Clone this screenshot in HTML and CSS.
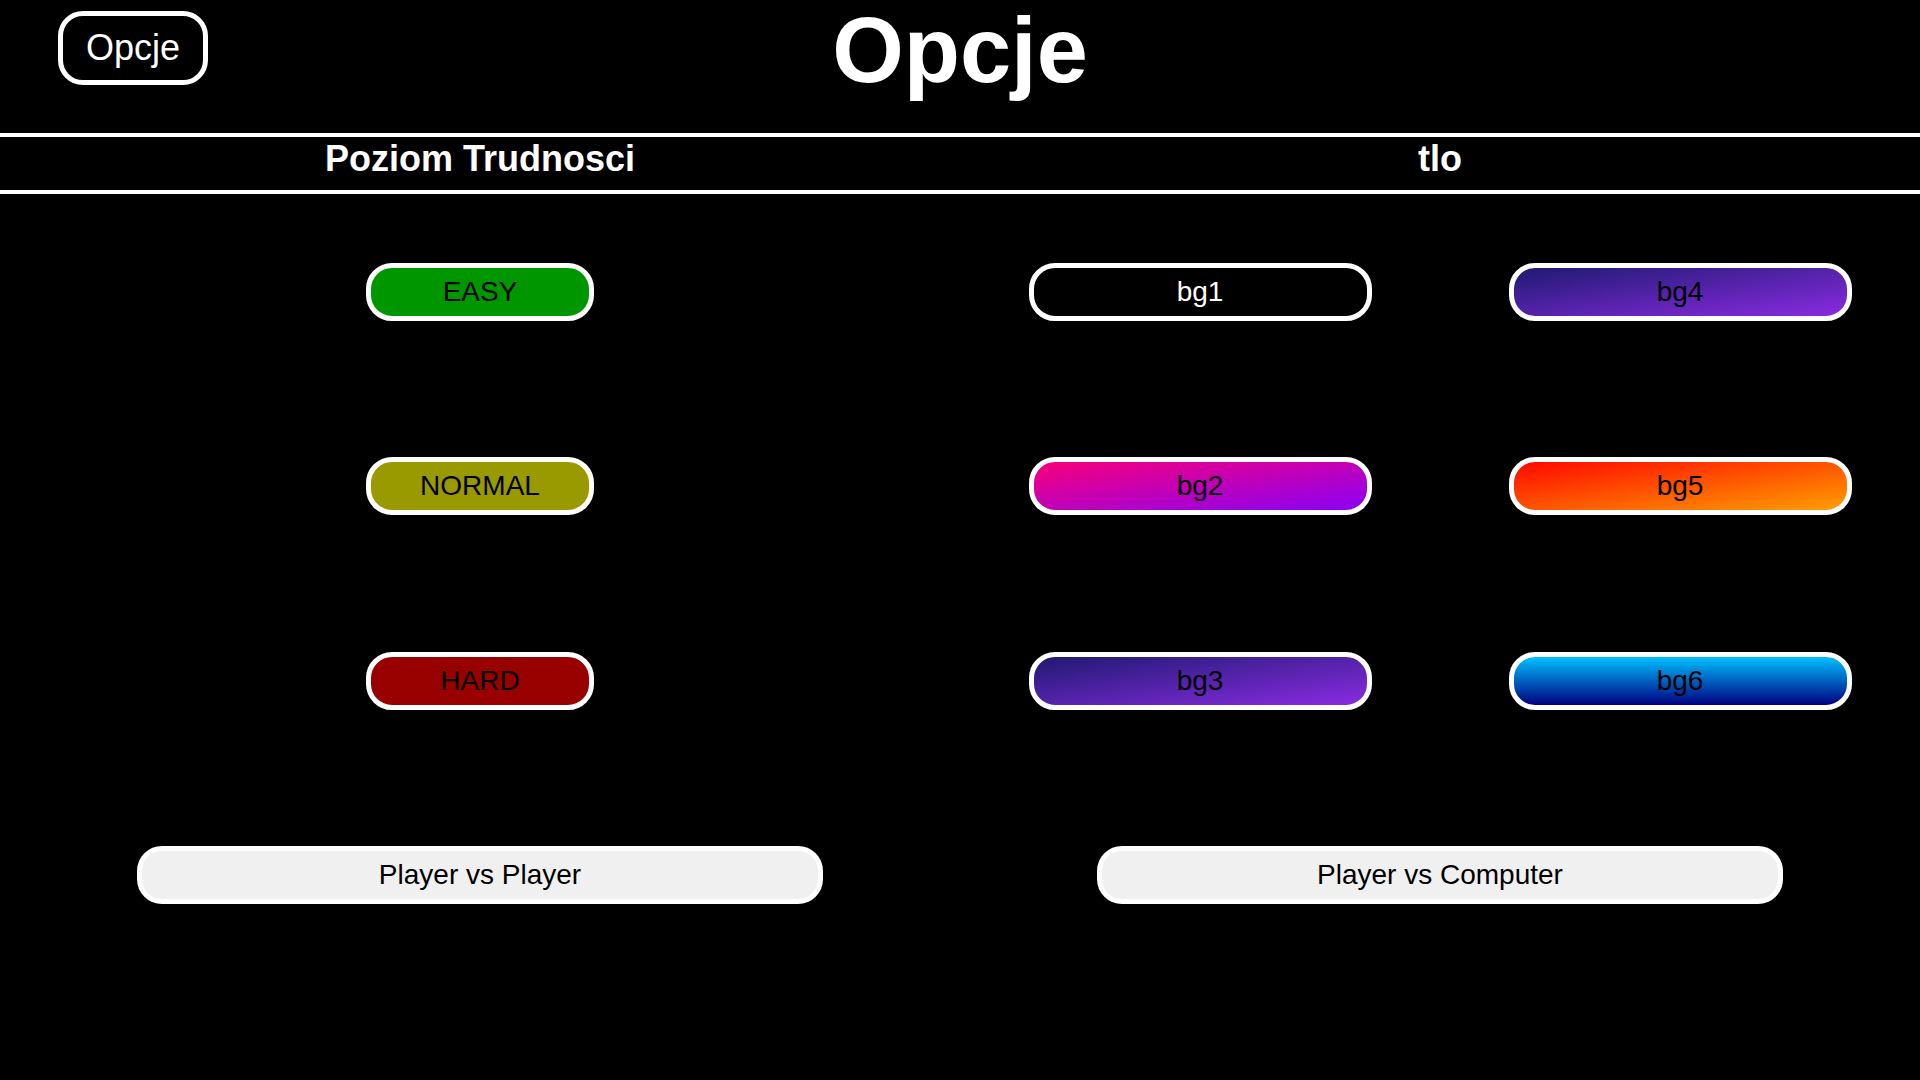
FILE: index.html
```html
<!DOCTYPE html>
<html lang="pl">
<head>
<meta charset="utf-8">
<title>Opcje</title>
<link rel="stylesheet" href="styles.css">
</head>
<body>
<header class="top">
  <button class="menu-btn">Opcje</button>
  <h1 class="title">Opcje</h1>
  <div class="spacer"></div>
</header>
<div class="tabs">
  <div class="tab">Poziom Trudnosci</div>
  <div class="tab">tlo</div>
</div>
<main class="grid">
  <button class="btn diff easy">EASY</button>
  <button class="btn bg bg1">bg1</button>
  <button class="btn bg bg4">bg4</button>

  <button class="btn diff normal">NORMAL</button>
  <button class="btn bg bg2">bg2</button>
  <button class="btn bg bg5">bg5</button>

  <button class="btn diff hard">HARD</button>
  <button class="btn bg bg3">bg3</button>
  <button class="btn bg bg6">bg6</button>

  <button class="btn mode mode-left">Player vs Player</button>
  <button class="btn mode mode-right">Player vs Computer</button>
</main>
</body>
</html>
```
FILE: styles.css
```css
html, body {
  margin: 0;
  padding: 0;
  background: #000;
  color: #fff;
  font-family: "Liberation Sans", Arial, sans-serif;
}

body {
  width: 1920px;
  height: 1080px;
  overflow: hidden;
}

.top {
  display: grid;
  grid-template-columns: 1fr auto 1fr;
  align-items: start;
  height: 133px;
}

.menu-btn {
  justify-self: start;
  margin: 11px 0 0 58px;
  width: 150px;
  height: 74px;
  box-sizing: border-box;
  border: 5px solid #fff;
  border-radius: 25px;
  background: #000;
  color: #fff;
  font-family: "Liberation Sans", Arial, sans-serif;
  font-size: 36px;
  padding: 0;
  display: flex;
  align-items: center;
  justify-content: center;
}

.title {
  margin: -2px 0 0;
  font-size: 92px;
  font-weight: bold;
  line-height: normal;
  color: #fff;
}

.tabs {
  display: grid;
  grid-template-columns: 1fr 1fr;
  border-top: 4px solid #fff;
  border-bottom: 4px solid #fff;
  height: 52px;
  padding-top: 1px;
}

.tab {
  text-align: center;
  font-size: 36px;
  font-weight: bold;
  line-height: normal;
}

.grid {
  display: grid;
  grid-template-columns: repeat(4, 1fr);
  grid-auto-rows: 58px;
  row-gap: 136.3px;
  padding-top: 69px;
}

.btn {
  justify-self: center;
  box-sizing: border-box;
  height: 58px;
  border: 5px solid #fff;
  border-radius: 26px;
  padding: 0;
  font-family: "Liberation Sans", Arial, sans-serif;
  font-size: 28px;
  color: #000;
  display: flex;
  align-items: center;
  justify-content: center;
}

.diff {
  grid-column: 1 / 3;
  width: 228px;
}

.easy { background: #009600; }
.normal { background: #999900; }
.hard { background: #990000; }

.bg {
  width: 343px;
}

.bg1 { background: #000; color: #fff; }
.bg2 { background: linear-gradient(to bottom right, #f7007a, #8a00f5); }
.bg3, .bg4 { background: linear-gradient(to bottom right, #1f1a72, #8a2be2); }
.bg5 { background: linear-gradient(to bottom right, #ff0800, #ff9f00); }
.bg6 { background: linear-gradient(to bottom, #00c0ff, #000080); }

.mode {
  width: 686px;
  background: #f0f0f0;
  border-radius: 25px;
}

.mode-left { grid-column: 1 / 3; }
.mode-right { grid-column: 3 / 5; }
```
